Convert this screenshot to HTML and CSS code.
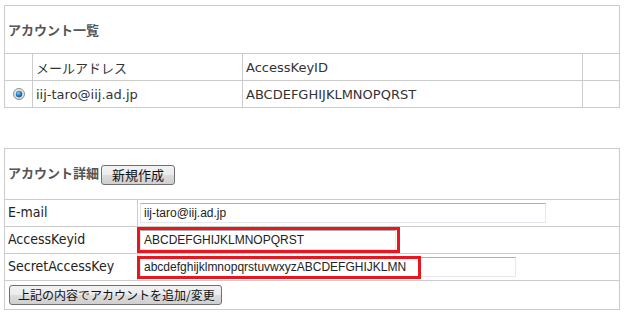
FILE: index.html
```html
<!DOCTYPE html>
<html lang="ja">

<head>
  <meta charset="UTF-8">
  <title>アカウント管理</title>
  <link rel="stylesheet" href="styles.css">
</head>

<body>
  <table class="list">
    <colgroup>
      <col class="c-sel">
      <col class="c-mail">
      <col class="c-key">
      <col class="c-end">
    </colgroup>
    <tr>
      <th colspan="4" class="head">アカウント一覧</th>
    </tr>
    <tr>
      <td></td>
      <td>メールアドレス</td>
      <td>AccessKeyID</td>
      <td></td>
    </tr>
    <tr>
      <td class="sel">
        <svg class="radio" width="12" height="12" viewBox="0 0 12 12">
          <defs>
            <radialGradient id="dot" cx="0.4" cy="0.35" r="0.7">
              <stop offset="0" stop-color="#8fd3f5" />
              <stop offset="0.5" stop-color="#2a86c9" />
              <stop offset="1" stop-color="#0b4f8a" />
            </radialGradient>
            <linearGradient id="ring" x1="0" y1="0" x2="0" y2="1">
              <stop offset="0" stop-color="#f0f0f0" />
              <stop offset="1" stop-color="#d4d4d4" />
            </linearGradient>
          </defs>
          <circle cx="6" cy="6" r="5.5" fill="url(#ring)" stroke="#8e8f8f" />
          <circle cx="6" cy="6" r="3.2" fill="url(#dot)" />
        </svg>
      </td>
      <td>iij-taro@iij.ad.jp</td>
      <td>ABCDEFGHIJKLMNOPQRST</td>
      <td></td>
    </tr>
  </table>

  <table class="detail">
    <colgroup>
      <col class="c-label">
      <col class="c-value">
    </colgroup>
    <tr>
      <th colspan="2" class="head"><span>アカウント詳細</span><button class="btn">新規作成</button></th>
    </tr>
    <tr>
      <td class="label">E-mail</td>
      <td class="value"><input class="text w-mail" type="text" value="iij-taro@iij.ad.jp"></td>
    </tr>
    <tr>
      <td class="label">AccessKeyid</td>
      <td class="value">
        <span class="field">
          <input class="text w-key" type="text" value="ABCDEFGHIJKLMNOPQRST">
          <span class="mark mark-key"></span>
        </span>
      </td>
    </tr>
    <tr>
      <td class="label">SecretAccessKey</td>
      <td class="value">
        <span class="field">
          <input class="text w-secret" type="text" value="abcdefghijklmnopqrstuvwxyzABCDEFGHIJKLMN">
          <span class="mark mark-secret"></span>
        </span>
      </td>
    </tr>
    <tr class="foot">
      <td colspan="2"><button class="btn btn-save">上記の内容でアカウントを追加/変更</button></td>
    </tr>
  </table>
</body>

</html>
```

FILE: styles.css
```css
body {
  margin: 0;
  padding: 5px 4px;
  font-family: 'DejaVu Sans', 'Noto Sans CJK JP', sans-serif;
  font-size: 13px;
  color: #333;
  background-color: #fff;
}

table {
  border-collapse: separate;
  border-spacing: 0;
  table-layout: fixed;
  width: 616px;
  border-top: 1px solid #cbcbcb;
  border-left: 1px solid #cbcbcb;
}

th, td {
  box-sizing: border-box;
  border-right: 1px solid #cbcbcb;
  border-bottom: 1px solid #cbcbcb;
  padding: 0 3px;
  height: 27px;
  text-align: left;
  vertical-align: middle;
  white-space: nowrap;
}

.head {
  font-family: 'Noto Sans CJK JP', sans-serif;
  font-weight: bold;
  color: #555;
  height: 48px;
}

/* account list */
.c-sel { width: 28px; }
.c-mail { width: 210px; }
.c-key { width: 340px; }
.c-end { width: 37px; }

.list td {
  padding-left: 3px;
}

.list .sel {
  padding: 0;
  text-align: center;
}

.radio {
  display: block;
  margin: 0 auto 0 8px;
}

/* account detail */
.detail {
  margin-top: 40px;
}

.detail .head {
  height: 51px;
}

.c-label { width: 133px; }
.c-value { width: 482px; }

.detail .label {
  font-family: 'DejaVu Sans Condensed', 'DejaVu Sans', sans-serif;
  font-size: 14px;
  color: #222;
  padding-bottom: 2px;
}

.detail .value {
  padding: 0 2px;
}

.foot td {
  height: 29px;
  padding: 0 4px;
}

.btn {
  font-family: 'Noto Sans CJK JP', sans-serif;
  font-size: 13px;
  color: #111;
  height: 20px;
  padding: 0 9px;
  border: 1px solid #707070;
  border-radius: 3px;
  background: linear-gradient(#f2f2f2, #ebebeb 50%, #dddddd 50%, #cfcfcf);
  line-height: 16px;
  vertical-align: middle;
}

.head .btn {
  margin-left: 2px;
  width: 74px;
}

.btn-save {
  font-size: 12px;
  padding: 0 8px;
  width: 213px;
}

.field {
  display: block;
  position: relative;
}

.text {
  display: block;
  box-sizing: border-box;
  height: 20px;
  padding: 0 3px;
  font-family: 'Liberation Sans', sans-serif;
  font-size: 12px;
  color: #222;
  border: 1px solid;
  border-color: #abadb3 #e3e9ef #e3e9ef #e2e3ea;
  background: #fff;
  outline: none;
}

.w-mail { width: 406px; }
.w-key { width: 256px; }
.w-secret { width: 376px; }

/* red highlight drawn over the fields */
.mark {
  position: absolute;
  box-sizing: border-box;
  border: 3px solid #e8161f;
  pointer-events: none;
}

.mark-key {
  left: -3px;
  top: -3px;
  width: 263px;
  height: 26px;
}

.mark-secret {
  left: -3px;
  top: -1px;
  width: 284px;
  height: 23px;
}
```
